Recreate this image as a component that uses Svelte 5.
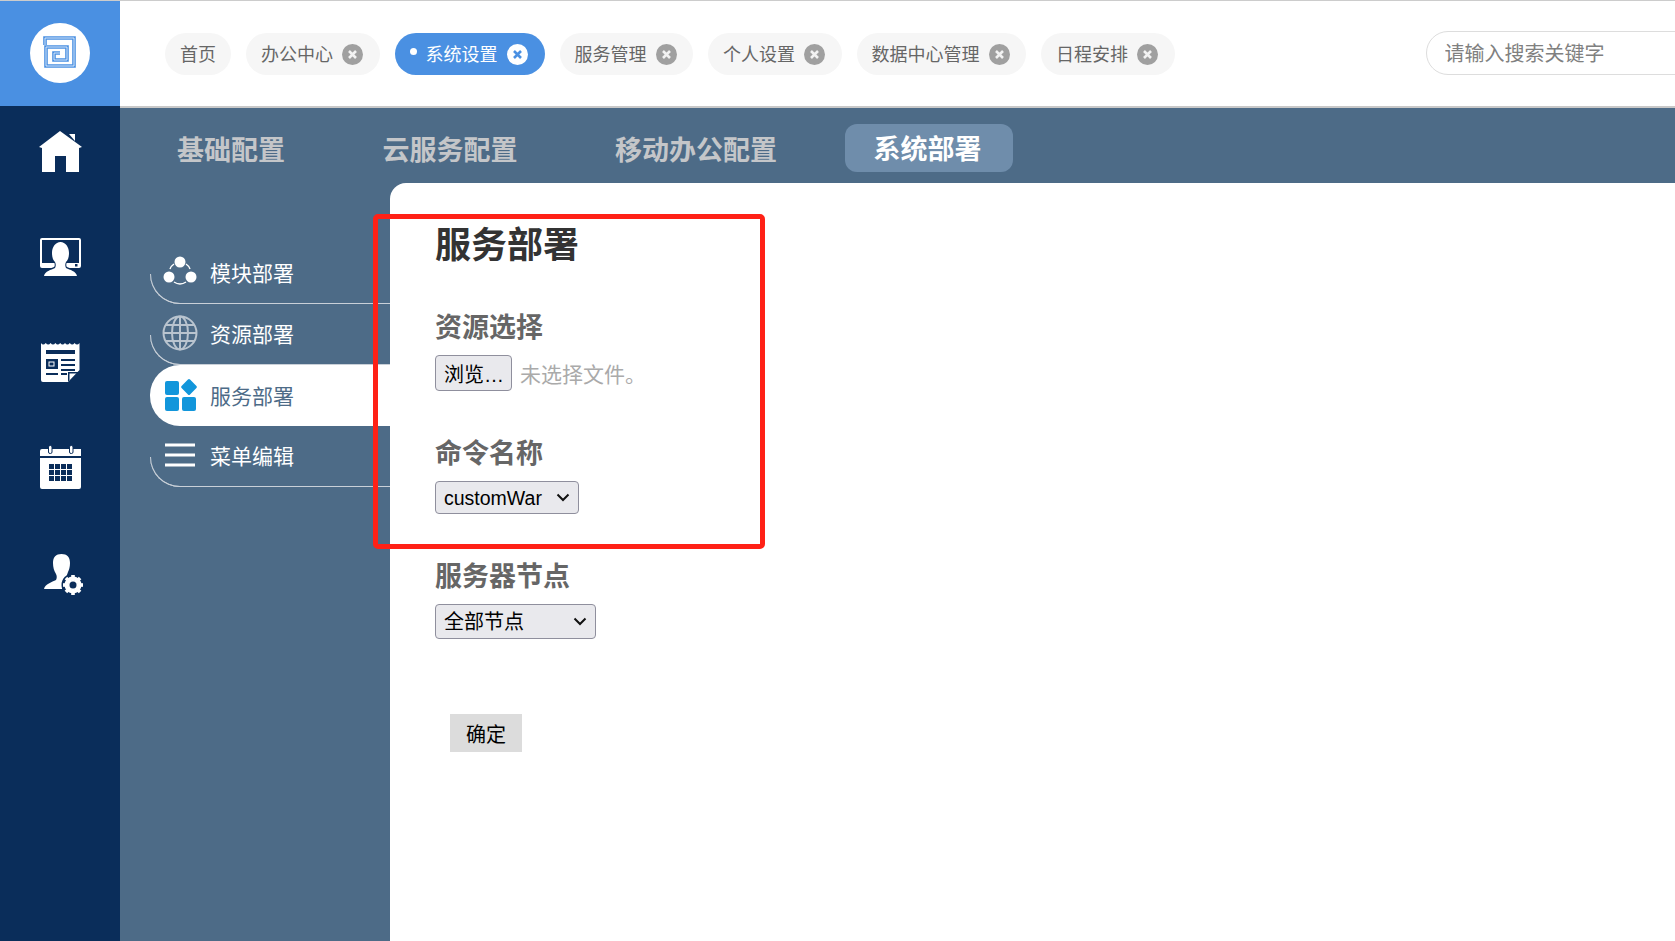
<script lang="ts">
  const tabs = [
    { name: '首页', close: false },
    { name: '办公中心', close: true },
    { name: '系统设置', close: true, active: true },
    { name: '服务管理', close: true },
    { name: '个人设置', close: true },
    { name: '数据中心管理', close: true },
    { name: '日程安排', close: true }
  ];
  const topNav = ['基础配置', '云服务配置', '移动办公配置', '系统部署'];
  const subNav = ['模块部署', '资源部署', '服务部署', '菜单编辑'];
  const chevron = "url(\"data:image/svg+xml,%3Csvg xmlns='http://www.w3.org/2000/svg' width='14' height='9'%3E%3Cpath d='M1.5 1.5 7 7l5.5-5.5' fill='none' stroke='%23111' stroke-width='2'/%3E%3C/svg%3E\")";
  const spiral = 'M15 22V15H44V43H16V24H37V37H24V30H30';
</script>

<div class="page">
  <aside class="rail">
    <div class="logo">
      <svg width="60" height="60" viewBox="0 0 60 60">
        <circle cx="30" cy="30" r="30" fill="#fff" />
        <path d={spiral} fill="none" stroke="#4a90e2" stroke-width="3.600" />
        <path d={spiral} fill="none" stroke="#fff" stroke-width="1" opacity=".75" />
      </svg>
    </div>
    <nav class="rail-icons">
      <svg width="43" height="41" viewBox="0 0 43 41">
        <path fill="#fff" d="M21 0 43 16l-3 1v24H27V25H16v16H3V17l-3-1z" />
        <path fill="#fff" d="M30 3h6v7z" />
      </svg>
      <svg width="41" height="39" viewBox="0 0 41 39">
        <path fill="#fff" d="M2 0h37a2 2 0 0 1 2 2v26a2 2 0 0 1-2 2H2a2 2 0 0 1-2-2V2a2 2 0 0 1 2-2zm0 2v23h37V2z" />
        <path fill="#0a2d5a" d="M3 39c0-6 6-8 11-10 1-1 1-3 0-5-2-2-3-5-3-9 0-7 4-12 9.500-12S30 8 30 15c0 4-1 7-3 9-1 2-1 4 0 5 5 2 11 4 11 10z" />
        <path fill="#fff" d="M4 38c1-5 7-6 11-8 1-2 1-4 0-6-2-2-3-5-3-9 0-6 3.500-11 8.500-11S29 9 29 15c0 4-1 7-3 9-1 2-1 4 0 6 4 2 10 3 11 8z" />
        <rect x="35" y="26" width="2.500" height="2.500" fill="#0a2d5a" />
      </svg>
      <svg width="39" height="39" viewBox="0 0 39 39">
        <path fill="#fff" d="M0 0q2 3 4.800 0 2.400 3 4.800 0 2.400 3 4.800 0 2.400 3 4.800 0 2.400 3 4.800 0 2.400 3 4.800 0 2.400 3 4.800 0 2.400 3 4.900 0v27L27 39H2a2 2 0 0 1-2-2z" />
        <g fill="#0a2d5a">
          <rect x="5" y="7" width="29" height="4" />
          <rect x="5" y="16" width="12" height="10" />
          <rect x="20" y="16" width="14" height="2" />
          <rect x="20" y="21" width="14" height="2" />
          <rect x="20" y="26" width="14" height="2" />
          <rect x="5" y="30" width="12" height="2" />
          <rect x="20" y="30" width="6" height="2" />
          <path d="M27 39V29h11l-1.500 1.500H28.500V37z" />
        </g>
        <rect x="8" y="19" width="5" height="4" fill="none" stroke="#fff" />
      </svg>
      <svg width="41" height="44" viewBox="0 0 41 44">
        <path fill="#fff" d="M2 4h39v7H0V6a2 2 0 0 1 2-2zM0 13h41v29a2 2 0 0 1-2 2H2a2 2 0 0 1-2-2z" />
        <g fill="#fff" stroke="#0a2d5a">
          <rect x="8.500" y=".5" width="3.500" height="8" rx="1.500" />
          <rect x="29.500" y=".5" width="3.500" height="8" rx="1.500" />
        </g>
        <g fill="#0a2d5a">
          {#each [19, 25, 31] as y}
            {#each [9, 15, 21, 27] as x}
              <rect {x} {y} width="5" height="5" />
            {/each}
          {/each}
        </g>
      </svg>
      <svg class="user-gear" width="40" height="42" viewBox="0 0 40 42">
        <path fill="#fff" d="M0 36c1-5 8-7 12-9 1-2 1-4 0-6-2-3-3-7-3-11C9 4 12 1 17.500 1S26 4 26 10c0 4-1 7-2 9l-6 17z" />
        <g transform="translate(29 32)">
          <circle r="11.500" fill="#0a2d5a" />
          <circle r="6.500" fill="none" stroke="#fff" stroke-width="4" />
          {#each [0, 45, 90, 135] as a}
            <rect x="-1.800" y="-10" width="3.600" height="20" fill="#fff" transform="rotate({a})" />
          {/each}
          <circle r="3.500" fill="#0a2d5a" />
        </g>
      </svg>
    </nav>
  </aside>

  <div class="main">
    <header class="top">
      <ul class="tabs">
        {#each tabs as t}
          <li class="tab" class:active={t.active} class:plain={!t.close}>
            {#if t.active}<span class="dot"></span>{/if}
            <span>{t.name}</span>
            {#if t.close}
              <svg class="x" width="21" height="21" viewBox="0 0 21 21">
                <circle cx="10.500" cy="10.500" r="10.500" fill={t.active ? '#fff' : '#a0a0a0'} />
                <path d="M7 7l7 7M14 7l-7 7" stroke={t.active ? '#4a90e2' : '#f2f2f2'} stroke-width="2.600" />
              </svg>
            {/if}
          </li>
        {/each}
      </ul>
      <input class="search" placeholder="请输入搜索关键字" />
    </header>

    <nav class="band">
      {#each topNav as n, i}
        <a class="band-item" class:on={i === 3}>{n}</a>
      {/each}
    </nav>

    <div class="body">
      <ul class="side">
        {#each subNav as s, i}
          <li class="side-item" class:current={i === 2}>
            <span class="side-icon" class:nudge={i !== 2}>
              {#if i === 0}
                <svg width="34" height="34" viewBox="0 0 34 34">
                  <g fill="#fff">
                    <circle cx="17" cy="7" r="5.500" />
                    <circle cx="6" cy="22" r="5.500" />
                    <circle cx="28" cy="22" r="5.500" />
                  </g>
                  <path d="M7 14q1-3 4-5M27 14q-1-3-4-5M11 27q6 4 12 0" fill="none" stroke="#fff" stroke-width="1.500" />
                </svg>
              {:else if i === 1}
                <svg width="36" height="36" viewBox="0 0 36 36">
                  <g fill="none" stroke="#b9c4cf" stroke-width="2">
                    <circle cx="18" cy="18" r="16.500" />
                    <ellipse cx="18" cy="18" rx="8" ry="16.500" />
                    <path d="M18 1.500v33M1.500 18h33M4 10h28M4 26h28" />
                  </g>
                </svg>
              {:else if i === 2}
                <svg width="34" height="34" viewBox="0 0 34 34">
                  <g fill="#1296db">
                    <rect x="1" y="3" width="14" height="14" rx="2" />
                    <rect x="1" y="19" width="14" height="14" rx="2" />
                    <rect x="18" y="19" width="14" height="14" rx="2" />
                    <rect x="19" y="3" width="12" height="12" rx="1.500" transform="rotate(45 25 9)" />
                  </g>
                </svg>
              {:else}
                <svg width="34" height="26" viewBox="0 0 34 26">
                  <path d="M2 3h30M2 13h30M2 23h30" stroke="#fff" stroke-width="3" />
                </svg>
              {/if}
            </span>
            <span>{s}</span>
          </li>
        {/each}
      </ul>

      <section class="panel">
        <h2>服务部署</h2>
        <div class="field first">
          <label for="res">资源选择</label>
          <div class="file-row">
            <button id="res" class="ctl browse">浏览…</button>
            <span class="no-file">未选择文件。</span>
          </div>
        </div>
        <div class="field cmd">
          <label for="cmd">命令名称</label>
          <select id="cmd" class="ctl pick w1" style="background-image:{chevron}">
            <option>customWar</option>
          </select>
        </div>
        <div class="field node">
          <label for="node">服务器节点</label>
          <select id="node" class="ctl pick w2" style="background-image:{chevron}">
            <option>全部节点</option>
          </select>
        </div>
        <button class="ok">确定</button>
      </section>
    </div>
  </div>

  <div class="annot"></div>
</div>

<style>
  :global(body) {
    margin: 0;
    background: #fff;
  }
  .page {
    position: relative;
    display: flex;
    height: 941px;
    overflow: hidden;
    box-sizing: border-box;
    border-top: 1px solid #ccc;
    font-family: "Liberation Sans", "Noto Sans CJK SC", sans-serif;
  }
  .rail {
    flex: 0 0 120px;
    background: #0a2d5a;
  }
  .logo {
    height: 105px;
    background: #4a90e2;
    display: flex;
    align-items: center;
    justify-content: center;
    padding-bottom: 1px;
    box-sizing: border-box;
  }
  .rail-icons {
    display: flex;
    flex-direction: column;
    align-items: center;
    padding-top: 25px;
    gap: 0;
  }
  .rail-icons svg {
    display: block;
  }
  .rail-icons svg:nth-child(2) {
    margin-top: 66px;
  }
  .rail-icons svg:nth-child(3) {
    margin-top: 66px;
  }
  .rail-icons svg:nth-child(4) {
    margin-top: 63px;
  }
  .rail-icons svg:nth-child(5) {
    margin-top: 64px;
  }
  .user-gear {
    margin-left: 7px;
  }
  .main {
    flex: 1;
    min-width: 0;
    display: flex;
    flex-direction: column;
    background: #4d6b87;
  }
  .top {
    flex: 0 0 107px;
    box-sizing: border-box;
    background: #fff;
    border-bottom: 2px solid #c8c8c8;
    display: flex;
    align-items: flex-start;
    padding: 32px 0 0 45px;
  }
  .tabs {
    list-style: none;
    margin: 0;
    padding: 0;
    display: flex;
    gap: 15px;
  }
  .tab {
    height: 42px;
    box-sizing: border-box;
    display: flex;
    align-items: center;
    gap: 9px;
    padding: 0 16.500px 2px 15px;
    border-radius: 21px;
    background: #f6f6f6;
    color: #666;
    font-size: 18px;
    white-space: nowrap;
  }
  .tab.plain {
    padding-right: 15px;
  }
  .tab .x {
    margin-top: 2px;
  }
  .tab.active {
    background: #4a90e2;
    color: #fff;
    padding-right: 17px;
  }
  .dot {
    width: 7px;
    height: 7px;
    border-radius: 50%;
    background: #fff;
    margin-top: -4px;
  }
  .search {
    flex: 0 0 400px;
    margin: -2px 0 0 251px;
    height: 44px;
    box-sizing: border-box;
    border: 1px solid #ddd;
    border-radius: 22px;
    padding: 2px 18px 0;
    font: 20px "Liberation Sans", "Noto Sans CJK SC", sans-serif;
    outline: none;
  }
  .search::placeholder {
    color: #808080;
    opacity: 1;
  }
  .band {
    flex: 0 0 75px;
    box-sizing: border-box;
    display: flex;
    align-items: center;
    padding: 5px 0 0 57px;
    gap: 97.500px;
    font-size: 27px;
    font-weight: 700;
    color: #c4c6c9;
  }
  .band-item {
    display: block;
    white-space: nowrap;
  }
  .band-item.on {
    background: #6f8dab;
    color: #fff;
    padding: 0 31px 0 29px;
    height: 48px;
    line-height: 52px;
    border-radius: 12px;
    margin-left: -30px;
  }
  .body {
    flex: 1;
    display: flex;
    min-height: 0;
  }
  .side {
    list-style: none;
    margin: 0;
    padding: 60px 0 0 30px;
    width: 270px;
    box-sizing: border-box;
  }
  .side-item {
    position: relative;
    height: 61px;
    display: flex;
    align-items: center;
    gap: 11px;
    padding: 0 0 2px 12px;
    box-sizing: border-box;
    color: #fff;
    font-size: 21px;
    border-bottom: 1px solid #c9d0d8;
    border-bottom-left-radius: 30px;
  }
  .side-item::before {
    content: "";
    position: absolute;
    left: 0;
    right: 0;
    bottom: -1px;
    height: 30px;
    box-sizing: border-box;
    border-left: 1px solid #c9d0d8;
    border-bottom: 1px solid #c9d0d8;
    border-bottom-left-radius: 30px;
    pointer-events: none;
  }
  .side-item.current {
    background: #fff;
    color: #4d6b87;
    border-bottom: none;
    border-radius: 30px 0 0 30px;
  }
  .side-item.current::before {
    display: none;
  }
  .side-icon {
    width: 37px;
    display: flex;
    align-items: center;
    justify-content: center;
    flex: none;
  }
  .side-icon.nudge {
    transform: translateX(-1px);
  }
  .side-icon svg {
    display: block;
  }
  .panel {
    flex: 1;
    background: #fff;
    border-top-left-radius: 16px;
    padding: 40px 0 0 45px;
    color: #333;
  }
  h2 {
    margin: 0;
    font-size: 36px;
    line-height: 46px;
    color: #333;
  }
  .field label {
    display: block;
    font-size: 27px;
    font-weight: 700;
    line-height: 36px;
    color: #666;
    margin-bottom: 9px;
  }
  .first {
    margin-top: 41px;
  }
  .cmd {
    margin-top: 45px;
  }
  .node {
    margin-top: 45px;
  }
  .file-row {
    display: flex;
    align-items: center;
    gap: 8px;
  }
  .ctl {
    box-sizing: border-box;
    background-color: #e9e9ed;
    border: 1px solid #8f8f9d;
    border-radius: 4px;
    color: #000;
    font: 20px "Liberation Sans", "Noto Sans CJK SC", sans-serif;
    padding: 0 8px;
  }
  .browse {
    width: 77px;
    height: 36px;
    white-space: nowrap;
  }
  .no-file {
    font-size: 21px;
    color: #aaa;
  }
  .pick {
    display: block;
    appearance: none;
    background-repeat: no-repeat;
    background-position: right 8px center;
    outline: none;
  }
  .w1 {
    width: 144px;
    height: 33px;
    font-size: 19.5px;
  }
  .w2 {
    width: 161px;
    height: 35px;
  }
  .ok {
    display: block;
    margin: 75px 0 0 15px;
    width: 72px;
    height: 38px;
    border: none;
    background: #dcdcdc;
    color: #000;
    padding: 0;
    font: 20px "Liberation Sans", "Noto Sans CJK SC", sans-serif;
  }
  /* 红色标注框 */
  .annot {
    position: absolute;
    left: 373px;
    top: 213px;
    width: 392px;
    height: 335px;
    box-sizing: border-box;
    border: 5px solid #ff2116;
    border-radius: 5px;
    pointer-events: none;
  }
</style>
